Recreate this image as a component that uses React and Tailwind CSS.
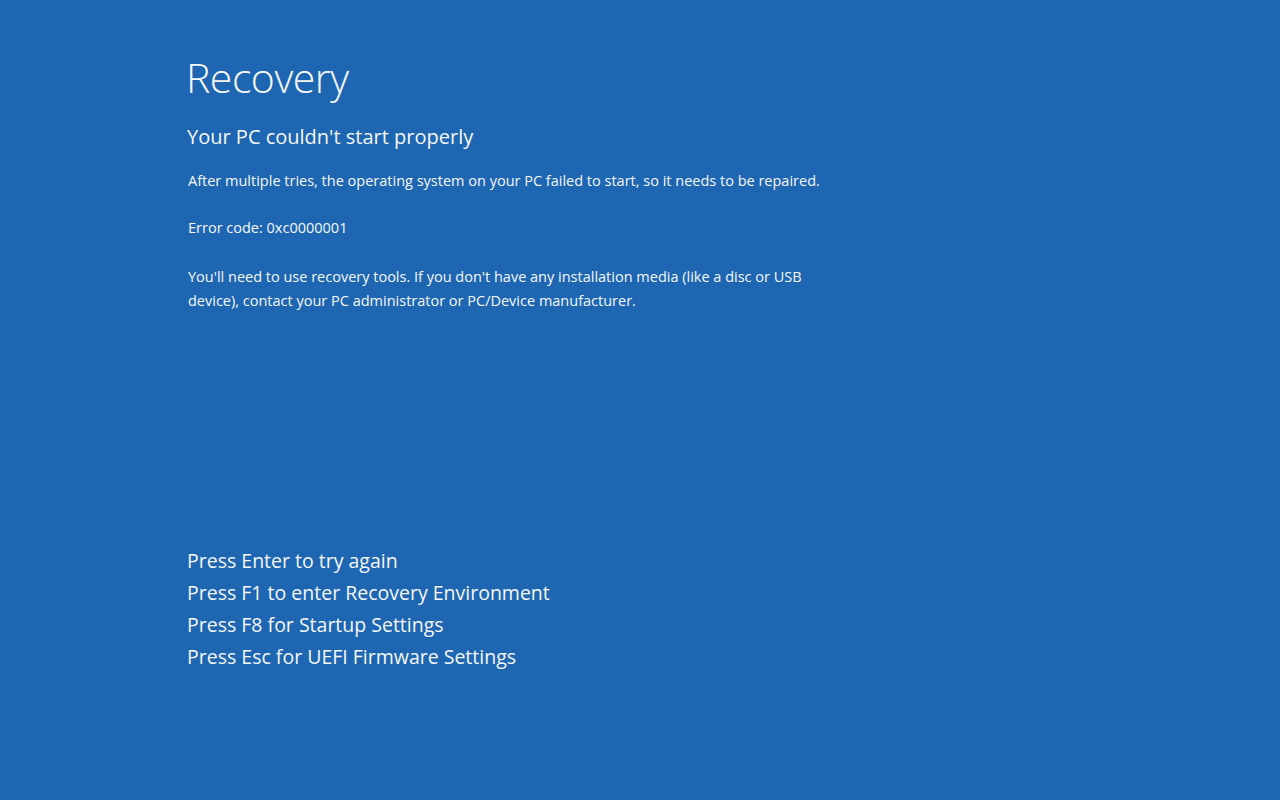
import React from 'react';

const options = [
  'Press Enter to try again',
  'Press F1 to enter Recovery Environment',
  'Press F8 for Startup Settings',
  'Press Esc for UEFI Firmware Settings',
];

const App = () => {
  return (
    <div className="w-[1280px] h-[800px] bg-[#1e66b1] text-[#f4f7fb] font-['Open_Sans',sans-serif] overflow-hidden">
      <div className="pl-[186px] pt-[51px] flex flex-col">
        {/* Title */}
        <h1 className="text-[41px] font-light leading-[52px] tracking-[-0.5px]">Recovery</h1>
        <h2 className="mt-[20px] pl-[1px] text-[20px] leading-[28px]">Your PC couldn't start properly</h2>

        {/* Details */}
        <div className="mt-[18px] pl-[2px] text-[14.5px] leading-[24px] flex flex-col w-[642px]">
          <p>After multiple tries, the operating system on your PC failed to start, so it needs to be repaired.</p>
          <p className="mt-[23px]">Error code: 0xc0000001</p>
          <p className="mt-[25px]">You'll need to use recovery tools. If you don't have any installation media (like a disc or USB device), contact your PC administrator or PC/Device manufacturer.</p>
        </div>

        {/* Key options */}
        <ul className="mt-[232px] pl-[1px] text-[19.5px] leading-[32px]">
          {options.map((o) => (
            <li key={o}>{o}</li>
          ))}
        </ul>
      </div>
    </div>
  );
};

export default App;
